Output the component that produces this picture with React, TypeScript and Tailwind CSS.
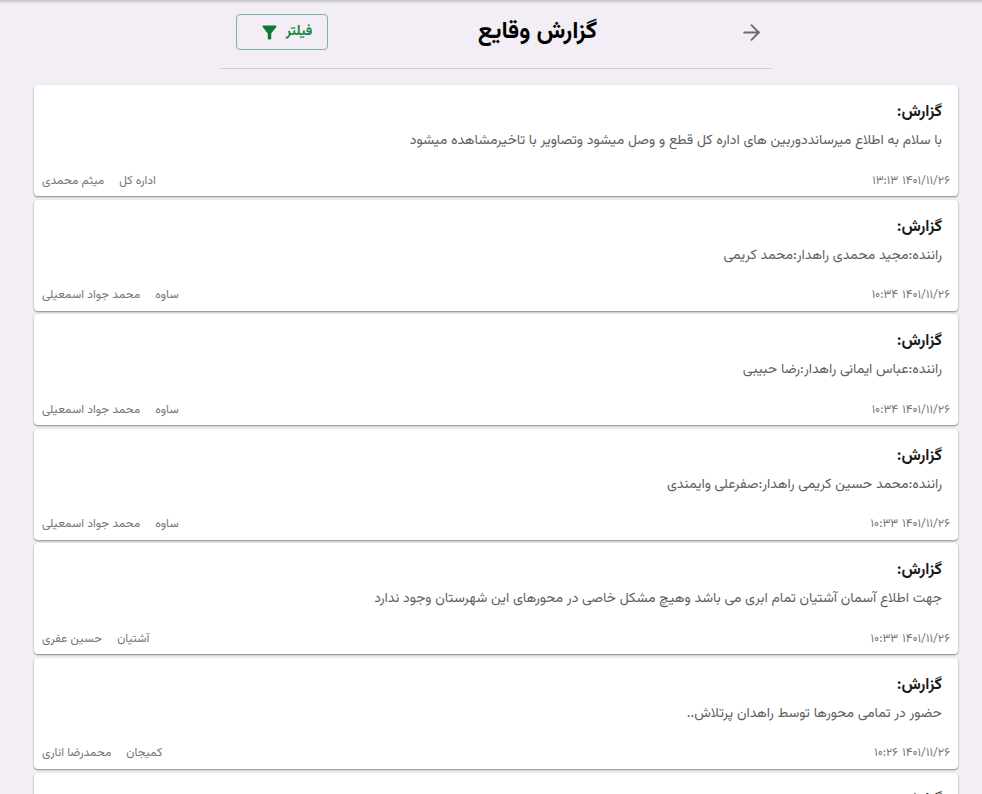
import { ArrowRight } from "lucide-react";

interface Report {
  body: string;
  date: string;
  time: string;
  place: string;
  author: string;
}

const REPORTS: Report[] = [
  {
    body: "با سلام به اطلاع میرسانددوربین های اداره کل قطع و وصل میشود وتصاویر با تاخیرمشاهده میشود",
    date: "۱۴۰۱/۱۱/۲۶",
    time: "۱۳:۱۳",
    place: "اداره کل",
    author: "میثم محمدی",
  },
  {
    body: "راننده:مجید محمدی راهدار:محمد کریمی",
    date: "۱۴۰۱/۱۱/۲۶",
    time: "۱۰:۳۴",
    place: "ساوه",
    author: "محمد جواد اسمعیلی",
  },
  {
    body: "راننده:عباس ایمانی راهدار:رضا حبیبی",
    date: "۱۴۰۱/۱۱/۲۶",
    time: "۱۰:۳۴",
    place: "ساوه",
    author: "محمد جواد اسمعیلی",
  },
  {
    body: "راننده:محمد حسین کریمی راهدار:صفرعلی وایمندی",
    date: "۱۴۰۱/۱۱/۲۶",
    time: "۱۰:۳۳",
    place: "ساوه",
    author: "محمد جواد اسمعیلی",
  },
  {
    body: "جهت اطلاع آسمان آشتیان تمام ابری می باشد وهیچ مشکل خاصی در محورهای این شهرستان وجود ندارد",
    date: "۱۴۰۱/۱۱/۲۶",
    time: "۱۰:۳۳",
    place: "آشتیان",
    author: "حسین عفری",
  },
  {
    body: "حضور در تمامی محورها توسط راهدان پرتلاش..",
    date: "۱۴۰۱/۱۱/۲۶",
    time: "۱۰:۲۶",
    place: "کمیجان",
    author: "محمدرضا اناری",
  },
  { body: "", date: "", time: "", place: "", author: "" },
];

function ReportCard({ report }: { report: Report }) {
  return (
    <div className="flex h-[111px] shrink-0 flex-col rounded-[4px] bg-white px-2 pt-4 pb-[6.5px] shadow-[0_1px_2px_rgba(0,0,0,0.45)]">
      <div className="pr-2 text-[16px] leading-[24px] font-bold text-[#1a1a1a]">گزارش:</div>
      <div className="mt-[6px] pr-2 text-[14px] leading-[21px] text-[#5f5f5f]">{report.body}</div>
      <div className="mt-auto flex items-center justify-between text-[12px] leading-[18px] text-[#757575]">
        <div className="flex gap-1">
          <span>{report.date}</span>
          <span>{report.time}</span>
        </div>
        <div className="flex gap-[15px]">
          <span>{report.place}</span>
          <span>{report.author}</span>
        </div>
      </div>
    </div>
  );
}

export default function App() {
  return (
    <div
      dir="rtl"
      className="flex h-[794px] flex-col overflow-hidden bg-[#f3eef6] font-['Vazirmatn','DejaVu_Sans',sans-serif]"
    >
      <div className="h-1 shrink-0 bg-gradient-to-b from-[#c4c1c8] to-[#f3eef6]" />
      <div className="mr-[210px] ml-[220px] flex h-[65px] shrink-0 items-center justify-between border-b border-[#d2d0d4] pr-2 pl-4 pb-[8px]">
        <ArrowRight size={25} strokeWidth={1.8} className="text-[#6a6a6a]" />
        <h1 className="ml-2 text-[24px] font-bold text-black">گزارش وقایع</h1>
        <button className="flex h-9 w-[92px] items-center justify-center gap-[6px] rounded-[4px] border border-[#7fb58f] pl-[7px] text-[14px] font-bold text-[#0f8a3c]">
          <span>فیلتر</span>
          <svg viewBox="0 0 24 24" className="h-[21px] w-[21px] fill-[#0c7a32]">
            <path d="M4.25 5.61C6.27 8.2 10 13 10 13v6c0 .55.45 1 1 1h2c.55 0 1-.45 1-1v-6s3.72-4.8 5.74-7.39c.51-.66.04-1.61-.79-1.61H5.04c-.83 0-1.3.95-.79 1.61z" />
          </svg>
        </button>
      </div>
      <div className="mt-4 mr-6 ml-[34px] flex flex-col gap-[3.6px]">
        {REPORTS.map((r, i) => (
          <ReportCard key={i} report={r} />
        ))}
      </div>
    </div>
  );
}
